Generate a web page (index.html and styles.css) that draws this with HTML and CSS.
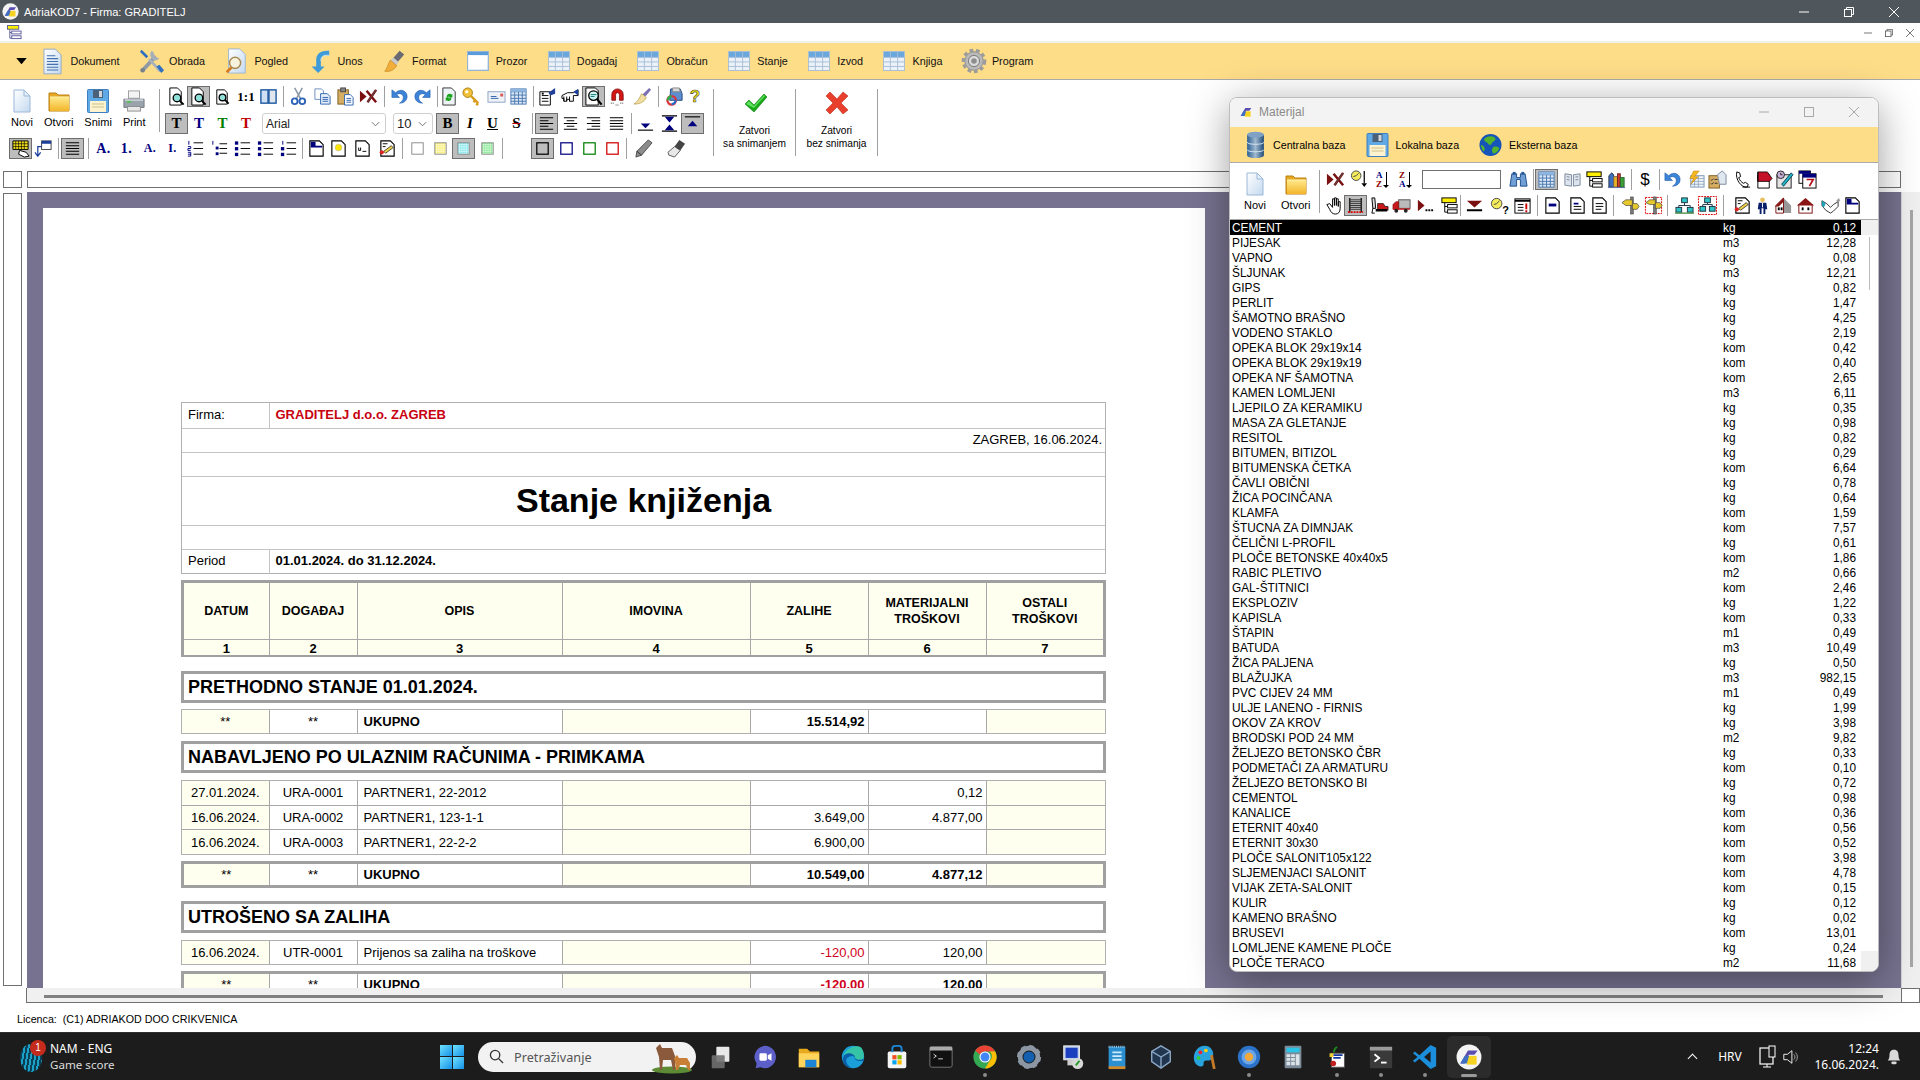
FILE: index.html
```html
<!DOCTYPE html>
<html lang="hr">
<head>
<meta charset="utf-8">
<title>AdriaKOD7</title>
<link rel="stylesheet" href="styles.css">
</head>
<body>
<svg class="defs" aria-hidden="true">
<defs>
<linearGradient id="gDoc" x1="0" y1="0" x2="1" y2="1"><stop offset="0" stop-color="#fff"/><stop offset="1" stop-color="#c4d9f0"/></linearGradient>
<linearGradient id="gFold" x1="0" y1="0" x2="0" y2="1"><stop offset="0" stop-color="#ffe98a"/><stop offset="1" stop-color="#f2b52a"/></linearGradient>
<linearGradient id="gDb" x1="0" y1="0" x2="1" y2="0"><stop offset="0" stop-color="#2b5f92"/><stop offset=".5" stop-color="#9fb9cf"/><stop offset="1" stop-color="#1f4a78"/></linearGradient>
<pattern id="pY" width="2" height="2" patternUnits="userSpaceOnUse"><rect width="2" height="2" fill="#fff"/><rect width="1.2" height="1.2" fill="#f5e300"/></pattern>
<pattern id="pC" width="2" height="2" patternUnits="userSpaceOnUse"><rect width="2" height="2" fill="#fff"/><rect width="1.2" height="1.2" fill="#1fd5e0"/></pattern>
<pattern id="pG" width="2" height="2" patternUnits="userSpaceOnUse"><rect width="2" height="2" fill="#fff"/><rect width="1.2" height="1.2" fill="#25d63a"/></pattern>

<symbol id="logo" viewBox="0 0 24 24"><circle cx="12" cy="12" r="11.5" fill="#f4f4f4"/><path d="M4 18L11 6h9l-3 4h-5l-4 8z" fill="#5a4fb0"/><rect x="10" y="11" width="9" height="8" fill="#f6d321"/><path d="M4 18l4-7h4l-2 7z" fill="#3f6fc4"/></symbol>
<symbol id="tree" viewBox="0 0 16 16"><rect x="0.5" y="0.5" width="12" height="4" fill="#f7ef00" stroke="#5a5a9a"/><path d="M3 5v9h2M3 8h2" fill="none" stroke="#5a5a9a"/><rect x="5" y="6.5" width="10" height="3" fill="#fff" stroke="#5a5a9a"/><rect x="5" y="11.5" width="10" height="3" fill="#fff" stroke="#5a5a9a"/></symbol>
<symbol id="tri" viewBox="0 0 12 8"><path d="M0 0h12L6 7z" fill="#000"/></symbol>

<symbol id="r-doc" viewBox="0 0 20 28"><path d="M1 1h12l6 6v20H1z" fill="url(#gDoc)" stroke="#8fa9c8"/><path d="M4 8h9M4 11h12M4 14h12M4 17h12M4 20h12M4 23h12" stroke="#4372b0" stroke-width="1.2"/></symbol>
<symbol id="r-tools" viewBox="0 0 28 28"><path d="M4 25L19 9" stroke="#8f99a5" stroke-width="4"/><path d="M16 3a6 6 0 0 0 6 10l2-2-5-1-1-5z" transform="translate(-1 0)" fill="#a6b0bb"/><path d="M24 25L12 12" stroke="#a9b2bc" stroke-width="3"/><path d="M4 2l7 7-2 2-7-7z" fill="#2d6fc0"/><path d="M25 27l-5-7 3-2 5 6z" fill="#2d6fc0"/><circle cx="5" cy="24" r="2.5" fill="#78818c"/></symbol>
<symbol id="r-pog" viewBox="0 0 24 28"><path d="M4 1h12l6 6v20H4z" fill="url(#gDoc)" stroke="#9db6d3"/><circle cx="11" cy="16" r="6" fill="#f7f2dd" stroke="#a88b55" stroke-width="1.6"/><path d="M7 21l-5 5" stroke="#d87a1c" stroke-width="3"/></symbol>
<symbol id="r-unos" viewBox="0 0 24 28"><path d="M9 20V13C9 6 14 2 23 3v5c-6-1-9 1-9 6v6h4l-7 7-7-7z" fill="#3f9ad8"/><path d="M14 14c0-5 3-7 9-6" fill="none" stroke="#bfe3f7" stroke-width="1"/></symbol>
<symbol id="r-format" viewBox="0 0 26 28"><path d="M19 3l5 4-7 8-5-4z" fill="#6a6a72"/><path d="M12 10l6 5-3 4-6-5z" fill="#c9c9c9"/><path d="M9 13l7 6c-3 5-8 7-13 6 3-3 3-7 6-12z" fill="#f1ae3a" stroke="#b87a18" stroke-width=".6"/></symbol>
<symbol id="r-win" viewBox="0 0 24 22"><rect x=".5" y=".5" width="23" height="21" fill="url(#gDoc)" stroke="#8fb1d6"/><rect x="1" y="1" width="22" height="3.5" fill="#5a9bdb"/><rect x="2" y="5" width="20" height="15" fill="#fff"/></symbol>
<symbol id="r-tab" viewBox="0 0 24 22"><rect x=".5" y=".5" width="23" height="21" fill="#eaf1f8" stroke="#a7bdd4"/><path d="M1 1h22v6H1z" fill="#6aa7dd"/><path d="M8 1v20M16 1v20M1 7h22M1 12h22M1 17h22" stroke="#a7bdd4"/></symbol>
<symbol id="r-gear" viewBox="0 0 28 28"><circle cx="14" cy="14" r="10" fill="#b9b9b9" stroke="#8a8a8a"/><circle cx="14" cy="14" r="11.5" fill="none" stroke="#9c9c9c" stroke-width="3.5" stroke-dasharray="4 3"/><circle cx="14" cy="14" r="6" fill="#dcdcdc" stroke="#777"/><circle cx="14" cy="14" r="3" fill="#8d8d8d"/></symbol>

<symbol id="b-doc" viewBox="0 0 18 24"><path d="M1 1h10l6 6v16H1z" fill="url(#gDoc)" stroke="#9bb8d8"/><path d="M11 1v6h6z" fill="#e5effa" stroke="#9bb8d8"/></symbol>
<symbol id="b-fold" viewBox="0 0 22 22"><path d="M1 3h7l2 2h11v16H1z" fill="#e7a822" stroke="#b97f12"/><path d="M2 7h19v14H2z" fill="url(#gFold)"/><path d="M2 7h19" stroke="#fff2b3"/></symbol>
<symbol id="b-flop" viewBox="0 0 22 24"><rect x=".5" y=".5" width="21" height="23" rx="1" fill="#5fa9e6" stroke="#3f7fc0"/><rect x="6" y="1" width="10" height="8" fill="#4b6178"/><rect x="12" y="2" width="3" height="6" fill="#cfd8e0"/><rect x="3" y="12" width="16" height="11" fill="#fdf4cf"/><path d="M5 15h12M5 18h12" stroke="#cdbf8d"/></symbol>
<symbol id="b-print" viewBox="0 0 24 24"><rect x="6" y="1" width="12" height="8" fill="#f4f4f4" stroke="#9a9a9a"/><path d="M1 10h22v9H1z" fill="#9aa3ab" stroke="#6f7780"/><rect x="5" y="18" width="14" height="5" fill="#e8e8e8" stroke="#8b8b8b"/><rect x="4" y="12" width="5" height="2" fill="#5bbf5b"/><path d="M2 10h20v2H2z" fill="#c5ccd2"/></symbol>
<symbol id="ok" viewBox="0 0 24 24"><path d="M2 13l4-4 5 5L21 3l3 3-13 15z" fill="#18a818" stroke="#0e7d0e" stroke-width=".6"/><path d="M3 13l3-3 5 5L21 4l1 1-11 12z" fill="#5fe05f"/></symbol>
<symbol id="no" viewBox="0 0 24 24"><path d="M5 1l7 7 6-7 5 4-7 7 7 7-5 4-6-7-7 7-4-4 7-7-7-7z" fill="#e8402c" stroke="#b92a1a" stroke-width=".6"/></symbol>

<symbol id="pm" viewBox="0 0 20 20"><path d="M3 1h8l4 4v14H3z" fill="#fff" stroke="#000"/><circle cx="10.5" cy="11.5" r="4" fill="#8fe0d8" stroke="#000" stroke-width="1.4"/><path d="M13.5 14.5l4 4" stroke="#000" stroke-width="2"/></symbol>
<symbol id="pm2" viewBox="0 0 20 20"><path d="M4 3h8l3 3v12H4z" fill="#fff" stroke="#000"/><circle cx="10" cy="11" r="3.5" fill="#8fe0d8" stroke="#000" stroke-width="1.4"/><path d="M12.5 13.5l4 4" stroke="#000" stroke-width="2"/></symbol>
<symbol id="book" viewBox="0 0 20 20"><rect x="2" y="3" width="7.5" height="14" fill="#cfe0f5" stroke="#12509a" stroke-width="1.4"/><rect x="10.5" y="3" width="7.5" height="14" fill="#dfe6ee" stroke="#12509a" stroke-width="1.4"/></symbol>
<symbol id="sci" viewBox="0 0 20 20"><path d="M6 1l6 11M14 1L8 12" stroke="#8b97a3" stroke-width="1.6"/><circle cx="6" cy="15" r="3" fill="none" stroke="#2b63b8" stroke-width="2"/><circle cx="14" cy="15" r="3" fill="none" stroke="#2b63b8" stroke-width="2"/></symbol>
<symbol id="copy" viewBox="0 0 20 20"><path d="M2 2h7l2 2v9H2z" fill="#fff" stroke="#6c8fc0"/><path d="M8 7h7l3 3v8H8z" fill="#e6effa" stroke="#2f63ad"/><path d="M10 11h6M10 13h6M10 15h6" stroke="#2f63ad"/></symbol>
<symbol id="paste" viewBox="0 0 20 20"><rect x="2" y="3" width="11" height="15" fill="#d6ad62" stroke="#7d5d22"/><rect x="5" y="1" width="5" height="4" fill="#888" stroke="#444"/><path d="M9 8h6l3 3v8H9z" fill="#fff" stroke="#2f63ad"/><path d="M11 12h5M11 14h5M11 16h5" stroke="#2f63ad"/></symbol>
<symbol id="delx" viewBox="0 0 20 20"><path d="M1 4l7 6-7 6z" fill="#7a1010"/><path d="M8 4l10 12M18 3L9 16" stroke="#7a1010" stroke-width="2.6"/><path d="M18 3L9 16" stroke="#555" stroke-width="1"/></symbol>
<symbol id="undo" viewBox="0 0 20 20"><path d="M2 3v8h8L7 8c3-2 7-1 7 3 0 3-2 5-4 6 5 0 8-3 8-7 0-6-7-9-12-4z" fill="#3d84d8" stroke="#1e5aa8" stroke-width=".6"/></symbol>
<symbol id="redo" viewBox="0 0 20 20"><path d="M18 3v8h-8l3-3c-3-2-7-1-7 3 0 3 2 5 4 6-5 0-8-3-8-7 0-6 7-9 12-4z" fill="#3d84d8" stroke="#1e5aa8" stroke-width=".6"/></symbol>
<symbol id="dref" viewBox="0 0 20 20"><path d="M3 1h9l4 4v14H3z" fill="#eef3f8" stroke="#333"/><path d="M7 10a3 3 0 0 1 5-2l1-1v4H9l1-1a2 2 0 0 0-2 1zM12 12a3 3 0 0 1-5 2l-1 1v-4h4l-1 1a2 2 0 0 0 2-1z" fill="#17a317"/></symbol>
<symbol id="key" viewBox="0 0 20 20"><circle cx="6" cy="6" r="5" fill="#f2c13a" stroke="#a87a12"/><circle cx="5" cy="5" r="1.6" fill="#fff"/><path d="M9 9l8 8M14 14l-2 2M17 17l-2 2" stroke="#d79e1d" stroke-width="2.6"/></symbol>
<symbol id="mail" viewBox="0 0 20 20"><rect x="1" y="5" width="18" height="11" fill="#eef2f7" stroke="#8da4c2"/><path d="M4 10h6M4 12h8" stroke="#2f63ad"/><rect x="14" y="7" width="3" height="3" fill="#d55"/></symbol>
<symbol id="calc" viewBox="0 0 20 20"><rect x="2" y="2" width="16" height="16" fill="#dbe8f6" stroke="#4a78b0"/><path d="M2 5h16M2 8.500h16M2 12h16M2 15h16M6 5v13M10 5v13M14 5v13" stroke="#4a78b0"/><rect x="2" y="2" width="16" height="3" fill="#8fb6e0"/></symbol>
<symbol id="dflag" viewBox="0 0 20 20"><path d="M2 5h11v14H2z" fill="#fff" stroke="#000"/><path d="M4 9h7M4 12h7M4 15h7" stroke="#000"/><path d="M11 6l7-5v6l-5 2z" fill="#23409a"/><rect x="4" y="6" width="2" height="2" fill="#000"/></symbol>
<symbol id="hnd" viewBox="0 0 20 20"><path d="M1 9l6-3h6l5-3v6h-5v6H9v-2H6v2H3v-3H1z" fill="#fff" stroke="#000"/><path d="M13 5l5-3v7" fill="#1c3f9e"/><path d="M3 10v5M6 10v5M9 10v5" stroke="#000"/></symbol>
<symbol id="insp" viewBox="0 0 20 20"><path d="M2 1h10l3 3v15H2z" fill="#fff" stroke="#000"/><circle cx="10" cy="9" r="5" fill="#cff3ee" stroke="#000" stroke-width="1.4"/><path d="M7 8h6M7 10h4" stroke="#0a7a80"/><path d="M13.500 12.500l5 6" stroke="#000" stroke-width="2.2"/></symbol>
<symbol id="mag" viewBox="0 0 20 20"><path d="M4 14V8a6 6 0 0 1 12 0v6h-4V8a2 2 0 0 0-4 0v6z" fill="#d41616" stroke="#7a0a0a" stroke-width=".8"/><path d="M3 17h4M13 17h4M8 19h4" stroke="#333" stroke-dasharray="1 1"/></symbol>
<symbol id="broom" viewBox="0 0 20 20"><path d="M17 1l2 2-6 7-3-2z" fill="#7b6fb2"/><path d="M9 7l5 4c-2 5-7 7-13 7 3-2 6-6 8-11z" fill="#f0dd9f" stroke="#b59a4c" stroke-width=".7"/></symbol>
<symbol id="cpr" viewBox="0 0 20 20"><path d="M6 2h10l2 5v7H5z" fill="#5b8fd0" stroke="#244a80"/><path d="M8 1h7l1 4H8z" fill="#d8d8d8" stroke="#888"/><circle cx="7" cy="14" r="4.5" fill="none" stroke="#d9363e" stroke-width="2.4"/><path d="M3 14a4 4 0 0 1 4-4" fill="none" stroke="#28b34a" stroke-width="2.4"/><path d="M7 18a4 4 0 0 0 4-4" fill="none" stroke="#1e6fd0" stroke-width="2.4"/></symbol>
<symbol id="al-l" viewBox="0 0 20 20"><path d="M3 4h14M3 7h9M3 10h14M3 13h9M3 16h14" stroke="#000" stroke-width="1.1"/></symbol>
<symbol id="al-c" viewBox="0 0 20 20"><path d="M3 4h14M6 7h8M3 10h14M6 13h8M3 16h14" stroke="#000" stroke-width="1.1"/></symbol>
<symbol id="al-r" viewBox="0 0 20 20"><path d="M3 4h14M8 7h9M3 10h14M8 13h9M3 16h14" stroke="#000" stroke-width="1.1"/></symbol>
<symbol id="al-j" viewBox="0 0 20 20"><path d="M3 4h14M3 7h14M3 10h14M3 13h14M3 16h14" stroke="#000" stroke-width="1.1"/></symbol>
<symbol id="v-b" viewBox="0 0 20 20"><path d="M5 10h10l-5 5z" fill="#00007f"/><path d="M2 17h16" stroke="#000" stroke-width="1.2"/></symbol>
<symbol id="v-m" viewBox="0 0 20 20"><path d="M2 2h16M2 18h16" stroke="#000" stroke-width="1.2"/><path d="M5 3h10l-5 6zM5 17h10l-5-6z" fill="#00007f"/></symbol>
<symbol id="v-t" viewBox="0 0 20 20"><path d="M2 3h16" stroke="#000" stroke-width="1.2"/><path d="M5 13h10l-5-6z" fill="#00007f"/></symbol>
<symbol id="kb" viewBox="0 0 20 20"><path d="M2 2h16v9H2z" fill="#f3e21c" stroke="#000"/><path d="M2 5h16M2 8h16M5 2v9M8 2v9M11 2v9M14 2v9" stroke="#000" stroke-width=".7"/><path d="M9 12l7 2 3 4-5 1-6-3z" fill="#fff" stroke="#000"/></symbol>
<symbol id="tabar" viewBox="0 0 20 20"><rect x="8" y="2" width="10" height="9" fill="#fff" stroke="#444"/><rect x="8" y="2" width="10" height="3" fill="#1c3f9e"/><path d="M8 8H4v9M1 14l3 4 3-4" fill="none" stroke="#1c3f9e" stroke-width="1.3"/></symbol>
<symbol id="l1" viewBox="0 0 20 20"><path d="M8 4h10M8 10h10M8 16h10" stroke="#000"/><path d="M3 2v4M2 8h3v2H2v2h3M2 14h3v4H2M2 16h3" fill="none" stroke="#00007f"/></symbol>
<symbol id="l2" viewBox="0 0 20 20"><path d="M10 5h8M10 10h8M10 15h8" stroke="#000"/><path d="M3 2v4" stroke="#00007f"/><rect x="6" y="8" width="3" height="3" fill="#00007f"/><rect x="6" y="14" width="3" height="3" fill="#00007f"/></symbol>
<symbol id="l3" viewBox="0 0 20 20"><path d="M8 4h10M8 10h10M8 16h10" stroke="#000"/><rect x="2" y="2.500" width="3.500" height="3.500" fill="#00007f"/><rect x="2" y="8.500" width="3.500" height="3.500" fill="#00007f"/><rect x="2" y="14.500" width="3.500" height="3.500" fill="#00007f"/></symbol>
<symbol id="l4" viewBox="0 0 20 20"><path d="M8 4h10M8 10h10M8 16h10" stroke="#000"/><path d="M4 2v4" stroke="#00007f"/><rect x="2" y="8.500" width="3.500" height="3.500" fill="#00007f"/><rect x="2" y="14.500" width="3.500" height="3.500" fill="#00007f"/></symbol>
<symbol id="d-b" viewBox="0 0 20 20"><path d="M3 2h10l4 4v12H3z" fill="#fff" stroke="#000" stroke-width="1.2"/><path d="M4 3h5v4h7v2H4z" fill="#00007f"/></symbol>
<symbol id="d-y" viewBox="0 0 20 20"><path d="M3 2h10l4 4v12H3z" fill="#fff" stroke="#000" stroke-width="1.2"/><circle cx="10" cy="9" r="3.500" fill="#ffe600" stroke="#aa9" stroke-width=".5"/></symbol>
<symbol id="d-u" viewBox="0 0 20 20"><path d="M3 2h10l4 4v12H3z" fill="#fff" stroke="#000" stroke-width="1.2"/><path d="M6 9v3h2V9M10 13h4" fill="none" stroke="#000"/></symbol>
<symbol id="d-p" viewBox="0 0 20 20"><path d="M3 2h10l4 4v12H3z" fill="#fff" stroke="#000" stroke-width="1.2"/><path d="M5 5h5M5 8h3" stroke="#000"/><path d="M6 13l8-6 2 2-8 6z" fill="#f0d34a" stroke="#000" stroke-width=".7"/><circle cx="4" cy="14" r="2.200" fill="#d22"/></symbol>
<symbol id="d-m" viewBox="0 0 20 20"><path d="M3 2h10l4 4v12H3z" fill="#fff" stroke="#000" stroke-width="1.2"/><rect x="6" y="8" width="8" height="3" fill="#00007f"/></symbol>
<symbol id="d-l" viewBox="0 0 20 20"><path d="M3 2h10l4 4v12H3z" fill="#fff" stroke="#000" stroke-width="1.2"/><path d="M6 8h5" stroke="#00007f" stroke-width="2"/><path d="M6 11h8M6 14h8" stroke="#000"/></symbol>
<symbol id="d-t" viewBox="0 0 20 20"><path d="M3 2h10l4 4v12H3z" fill="#fff" stroke="#000" stroke-width="1.2"/><path d="M6 8h8M6 11h8M6 14h6" stroke="#000"/></symbol>
<symbol id="s0" viewBox="0 0 20 20"><rect x="4" y="4" width="12" height="12" fill="#fff" stroke="#8a8a8a"/></symbol>
<symbol id="sy" viewBox="0 0 20 20"><rect x="4" y="4" width="12" height="12" fill="url(#pY)" stroke="#8a8a8a"/></symbol>
<symbol id="sc" viewBox="0 0 20 20"><rect x="4" y="4" width="12" height="12" fill="url(#pC)" stroke="#8a8a8a"/></symbol>
<symbol id="sg" viewBox="0 0 20 20"><rect x="4" y="4" width="12" height="12" fill="url(#pG)" stroke="#8a8a8a"/></symbol>
<symbol id="ok-k" viewBox="0 0 20 20"><rect x="4" y="4" width="12" height="12" fill="none" stroke="#000" stroke-width="1.300"/></symbol>
<symbol id="ok-b" viewBox="0 0 20 20"><rect x="4" y="4" width="12" height="12" fill="none" stroke="#00007f" stroke-width="1.300"/></symbol>
<symbol id="ok-g" viewBox="0 0 20 20"><rect x="4" y="4" width="12" height="12" fill="none" stroke="#007f00" stroke-width="1.300"/></symbol>
<symbol id="ok-r" viewBox="0 0 20 20"><rect x="4" y="4" width="12" height="12" fill="none" stroke="#d00000" stroke-width="1.300"/></symbol>
<symbol id="pen1" viewBox="0 0 20 20"><path d="M15 1l4 3-11 13-6 2 1-6z" fill="#8c8c8c" stroke="#333" stroke-width=".8"/><path d="M3 13l5 4" stroke="#333"/></symbol>
<symbol id="pen2" viewBox="0 0 20 20"><path d="M13 1l6 4-5 7-6-4z" fill="#444"/><path d="M8 8l6 4-6 7-6-2-1-3z" fill="#e8e8e8" stroke="#333" stroke-width=".8"/></symbol>

<symbol id="clk" viewBox="0 0 20 20"><circle cx="6.500" cy="6" r="5" fill="#f4ec5a" stroke="#444"/><path d="M6.500 6L9 3.500M6.500 6L3.500 7" stroke="#444"/><path d="M15 1v13" stroke="#000" stroke-width="1.300"/><path d="M12 14h6l-3 4z" fill="#000"/></symbol>
<symbol id="clkq" viewBox="0 0 20 20"><circle cx="7" cy="8" r="5.500" fill="#f4ec5a" stroke="#444"/><path d="M7 8l3-3M7 8L4 9" stroke="#444"/></symbol>
<symbol id="binoc" viewBox="0 0 20 20"><path d="M3 4h5v4h4V4h5l2 13h-7V10H8v7H1z" fill="#6f9fd4" stroke="#1d4d8c"/><rect x="4" y="2" width="3" height="3" fill="#2a5a98"/><rect x="13" y="2" width="3" height="3" fill="#2a5a98"/></symbol>
<symbol id="obook" viewBox="0 0 20 20"><path d="M2 4l7 1v12l-7-1zM18 4l-7 1v12l7-1z" fill="#dde4ec" stroke="#7b8a9c"/><path d="M4 7l3 .5M4 10l3 .5M13 7.500l3-.5M13 10.500l3-.5" stroke="#7b8a9c"/></symbol>
<symbol id="ytree" viewBox="0 0 20 20"><rect x="2" y="2" width="15" height="5" fill="#ffee00" stroke="#000"/><path d="M5 7v10h3M5 11h3" fill="none" stroke="#000"/><rect x="8" y="9" width="10" height="3.500" fill="#fff" stroke="#000"/><rect x="8" y="14.500" width="10" height="3.500" fill="#fff" stroke="#000"/></symbol>
<symbol id="bks" viewBox="0 0 20 20"><path d="M2 18V6l3-3 2 2v13z" fill="#3d6fc0" stroke="#234"/><rect x="7" y="7" width="4" height="11" fill="#e6b422" stroke="#765"/><rect x="11" y="4" width="3" height="14" fill="#cf3a2a" stroke="#722"/><rect x="14" y="8" width="4" height="10" fill="#3da03d" stroke="#262"/><path d="M1 18.500h18" stroke="#5b6fa8"/></symbol>
<symbol id="tlit" viewBox="0 0 20 20"><rect x="5" y="6" width="14" height="12" fill="#eef3f8" stroke="#7d96b4"/><path d="M5 9h14M5 12h14M5 15h14M9 6v12M13 6v12" stroke="#7d96b4" stroke-width=".7"/><path d="M8 1h6L9 7h4l-8 8 3-6H4z" fill="#f5b61e" stroke="#b77f0c" stroke-width=".5"/></symbol>
<symbol id="clbh" viewBox="0 0 20 20"><rect x="1" y="6" width="11" height="13" fill="#d6ad62" stroke="#7d5d22"/><path d="M3 10l1 1 2-2M3 14l1 1 2-2M7 10h3M7 14h3" stroke="#333" fill="none"/><path d="M10 5l5-4 4 4v10h-7z" fill="#dfe7ef" stroke="#7b8a9c"/></symbol>
<symbol id="phone" viewBox="0 0 20 20"><path d="M4 2l3 1 1 4-2 1c1 3 3 5 5 6l2-1 3 2-1 3c-6 1-13-8-11-16z" fill="#fff" stroke="#000"/><path d="M10 18h8" stroke="#000"/></symbol>
<symbol id="nbk" viewBox="0 0 20 20"><path d="M3 5h12v14H3z" fill="#fff" stroke="#000"/><path d="M3 2h10l5 7-3 3H3z" fill="#c4122a" stroke="#000" stroke-width=".8"/><path d="M3 2v10" stroke="#000"/></symbol>
<symbol id="chart" viewBox="0 0 20 20"><rect x="2" y="5" width="15" height="14" fill="#e5e5e5" stroke="#222"/><circle cx="6" cy="5" r="4" fill="#c9b3d8" stroke="#222"/><path d="M6 5V3M6 5h2" stroke="#222"/><path d="M7 15L17 3l2 2L9 17z" fill="#1fb1c4" stroke="#145"/></symbol>
<symbol id="cal" viewBox="0 0 20 20"><rect x="1" y="1" width="12" height="13" fill="#fff" stroke="#000"/><rect x="5" y="4" width="14" height="15" fill="#fff" stroke="#000"/><rect x="5" y="4" width="14" height="4" fill="#00007f"/><path d="M1 1h12v3H1z" fill="#00007f"/><path d="M9 10h7l-4 7" fill="none" stroke="#b5121b" stroke-width="1.800"/></symbol>
<symbol id="ghand" viewBox="0 0 20 20"><path d="M3 9l3 5c1 3 3 5 6 5s5-2 5-6V6h-2v5V3h-2v7V2h-2v8V3H9v9L6 8z" fill="#fff" stroke="#000"/></symbol>
<symbol id="lad" viewBox="0 0 20 20"><path d="M4 2v15M16 2v15" stroke="#000" stroke-width="1.300"/><path d="M4 4h12M4 6h12M4 8h12M4 10h12M4 12h12M4 14h12" stroke="#333"/><path d="M2 17h16" stroke="#d00" stroke-width="2" stroke-dasharray="2 1"/></symbol>
<symbol id="exc" viewBox="0 0 20 20"><path d="M2 2h3l1 11H3z" fill="#ddd" stroke="#000"/><path d="M8 8h6l2 3h3v4H8z" fill="#c81a1a" stroke="#000" stroke-width=".7"/><path d="M6 15h12" stroke="#000" stroke-width="2.400"/><path d="M3 13l-1 5h3" stroke="#000" fill="none"/></symbol>
<symbol id="trk" viewBox="0 0 20 20"><rect x="7" y="4" width="12" height="9" fill="#bbb" stroke="#555"/><path d="M1 9l3-3h3v8H1z" fill="#c81a1a" stroke="#700" stroke-width=".6"/><rect x="1" y="13" width="18" height="1.500" fill="#c81a1a"/><circle cx="4.500" cy="15.500" r="2" fill="#222"/><circle cx="14.500" cy="15.500" r="2" fill="#222"/></symbol>
<symbol id="arrd" viewBox="0 0 20 20"><path d="M2 4l7 6-7 6z" fill="#7a1010"/><rect x="10" y="14" width="2" height="2" fill="#000"/><rect x="13" y="14" width="2" height="2" fill="#000"/><rect x="16" y="14" width="2" height="2" fill="#000"/></symbol>
<symbol id="trid" viewBox="0 0 20 20"><path d="M2 5h16l-8 7z" fill="#7a1010"/><path d="M2 15h16" stroke="#000" stroke-width="2"/></symbol>
<symbol id="dex" viewBox="0 0 20 20"><rect x="2" y="3" width="16" height="15" fill="#fff" stroke="#000"/><path d="M2 5h16" stroke="#000" stroke-width="2"/><path d="M5 9h6M5 12h6M5 15h6" stroke="#000"/><path d="M14 8v6" stroke="#c00" stroke-width="2"/><rect x="13" y="15" width="2" height="2" fill="#c00"/></symbol>
<symbol id="sign" viewBox="0 0 20 20"><rect x="10" y="1" width="3" height="18" fill="#777" stroke="#333" stroke-width=".5"/><path d="M1 7l4-3h7v6H5z" fill="#e6c72c" stroke="#444" stroke-width=".7"/><path d="M12 8h5l2 3-2 3h-5z" fill="#e6c72c" stroke="#444" stroke-width=".7"/></symbol>
<symbol id="signd" viewBox="0 0 20 20"><rect x="1.500" y="1.500" width="17" height="17" fill="none" stroke="#d00" stroke-dasharray="2 1"/><rect x="10" y="1" width="3" height="18" fill="#777" stroke="#333" stroke-width=".5"/><path d="M2 7l4-3h6v5H6z" fill="#e6c72c" stroke="#444" stroke-width=".7"/><path d="M12 7h5l2 3-2 3h-5z" fill="#e6c72c" stroke="#444" stroke-width=".7"/></symbol>
<symbol id="net" viewBox="0 0 20 20"><rect x="7" y="2" width="6" height="5" fill="#2cc4c4" stroke="#234"/><rect x="1" y="12" width="6" height="5" fill="#2cc4c4" stroke="#234"/><rect x="13" y="12" width="6" height="5" fill="#2cc4c4" stroke="#234"/><path d="M10 7v3M4 12v-2h12v2" stroke="#234" fill="none"/><path d="M0 18h20" stroke="#3a8a3a" stroke-width="1.400"/></symbol>
<symbol id="netd" viewBox="0 0 20 20"><rect x=".5" y=".5" width="19" height="19" fill="none" stroke="#d00" stroke-dasharray="2 1"/><rect x="7" y="2" width="6" height="5" fill="#2cc4c4" stroke="#234"/><rect x="2" y="11" width="6" height="5" fill="#2cc4c4" stroke="#234"/><rect x="12" y="11" width="6" height="5" fill="#2cc4c4" stroke="#234"/><path d="M10 7v2M5 11V9h10v2" stroke="#234" fill="none"/></symbol>
<symbol id="man" viewBox="0 0 20 20"><circle cx="10" cy="4" r="2.500" fill="#e8c060"/><path d="M6 7h8l1 7h-2v5h-2v-6H9v6H7v-5H5z" fill="#0a1f6a"/><path d="M10 7v5" stroke="#fff"/></symbol>
<symbol id="hsg" viewBox="0 0 20 20"><path d="M10 2l8 8v8H10z" fill="#999"/><path d="M10 2L2 10v8h8z" fill="#fff" stroke="#7a1010"/><path d="M10 2L1 11h4l5-5z" fill="#8a1414"/><rect x="4" y="12" width="2" height="3" fill="#000"/><rect x="7" y="12" width="2" height="3" fill="#000"/></symbol>
<symbol id="hsr" viewBox="0 0 20 20"><rect x="3" y="9" width="14" height="9" fill="#fff" stroke="#7a1010"/><path d="M10 2l9 8H1z" fill="#8a1414"/><rect x="6" y="12" width="2" height="3" fill="#000"/><rect x="12" y="12" width="2" height="3" fill="#000"/></symbol>
<symbol id="hnds" viewBox="0 0 20 20"><path d="M1 5l5 3 4 4 3-3 5-3v5l-5 5-3 2-5-3-4-5z" fill="#fff" stroke="#000" stroke-width=".8"/><path d="M1 5l4 3-2 4-2-2z" fill="#1fa1b8"/><path d="M19 2l-3 3 2 2 2-2z" fill="#999"/></symbol>

<symbol id="t-view" viewBox="0 0 28 28"><rect x="9" y="3" width="14" height="16" rx="1" fill="#e8e8e8"/><rect x="4" y="12" width="14" height="14" rx="1" fill="#707070" opacity=".9"/></symbol>
<symbol id="t-chat" viewBox="0 0 28 28"><path d="M14 2a12 12 0 1 1-5 23l-5 1 1-5A12 12 0 0 1 14 2z" fill="#5b5fc7"/><rect x="8" y="10" width="8" height="8" rx="1.500" fill="#fff"/><path d="M17 12l4-2v8l-4-2z" fill="#fff"/></symbol>
<symbol id="t-fold" viewBox="0 0 28 28"><path d="M3 5h9l3 3h10v17H3z" fill="#e9a91f"/><path d="M3 10h22v15H3z" fill="#ffd45a"/><rect x="10" y="17" width="12" height="8" fill="#1c84d8"/></symbol>
<symbol id="t-edge" viewBox="0 0 28 28"><circle cx="14" cy="14" r="12" fill="#1b9fd8"/><path d="M3 17c0-8 12-11 20-5 2 2 3 4 2 6-4 1-9 0-9-3 0-3-6-3-9 1-1 3 1 8 6 10C8 26 3 22 3 17z" fill="#0b5ea8"/><path d="M23 4c3 4 3 8 2 12-3 2-9 1-9-2s-7-6-12-2C7 4 18 0 23 4z" fill="#35c5a6"/></symbol>
<symbol id="t-store" viewBox="0 0 28 28"><rect x="4" y="8" width="20" height="18" rx="2" fill="#f5f5f5"/><path d="M9 9V5a3 3 0 0 1 3-3h4a3 3 0 0 1 3 3v4" fill="none" stroke="#1b88d8" stroke-width="2"/><rect x="9" y="12" width="4.500" height="4.500" fill="#f25022"/><rect x="14.500" y="12" width="4.500" height="4.500" fill="#7fba00"/><rect x="9" y="17.500" width="4.500" height="4.500" fill="#00a4ef"/><rect x="14.500" y="17.500" width="4.500" height="4.500" fill="#ffb900"/></symbol>
<symbol id="t-cmd" viewBox="0 0 28 28"><rect x="2" y="3" width="24" height="22" rx="2" fill="#111" stroke="#7a7a7a"/><rect x="2" y="3" width="24" height="4" fill="#aaa"/><path d="M6 11l3 2-3 2M11 16h5" stroke="#ddd" fill="none"/></symbol>
<symbol id="t-chrome" viewBox="0 0 28 28"><circle cx="14" cy="14" r="12.500" fill="#34a853"/><path d="M14 1.500a12.500 12.500 0 0 1 11 6.500H14a6 6 0 0 0-5.500 3.500L3.500 7A12.500 12.500 0 0 1 14 1.500z" fill="#ea4335"/><path d="M25 8a12.500 12.500 0 0 1-11 18.500L19 18a6 6 0 0 0-.5-10z" fill="#fbbc05"/><circle cx="14" cy="14" r="6" fill="#fff"/><circle cx="14" cy="14" r="4.800" fill="#4285f4"/></symbol>
<symbol id="t-gear" viewBox="0 0 28 28"><circle cx="14" cy="14" r="9.500" fill="none" stroke="#8c97a3" stroke-width="5"/><circle cx="14" cy="14" r="11.500" fill="none" stroke="#8c97a3" stroke-width="3" stroke-dasharray="5 4"/><circle cx="14" cy="14" r="6" fill="#1360b0"/></symbol>
<symbol id="t-rem" viewBox="0 0 28 28"><rect x="4" y="2" width="17" height="15" fill="#c0d0e8" stroke="#eee"/><rect x="6" y="4" width="13" height="11" fill="#1b3fbf"/><rect x="8" y="17" width="10" height="6" fill="#ccc"/><circle cx="19" cy="21" r="6" fill="#d8d8d8"/><path d="M17 23l4-5" stroke="#229922" stroke-width="2"/></symbol>
<symbol id="t-note" viewBox="0 0 28 28"><rect x="5" y="3" width="18" height="22" fill="#2c8fd0"/><path d="M5 3h18" stroke="#9ed0f0" stroke-width="2" stroke-dasharray="1 1"/><path d="M9 9h10M9 13h10M9 17h10" stroke="#cde9fa" stroke-width="2"/><rect x="5" y="24" width="18" height="3" fill="#d18a2c"/></symbol>
<symbol id="t-vbox" viewBox="0 0 28 28"><path d="M14 2l10 6v11l-10 7-10-7V8z" fill="#22354e" stroke="#8aa7c7" stroke-width="1.500"/><path d="M4 8l10 6 10-6M14 14v12" fill="none" stroke="#8aa7c7" stroke-width="1.500"/></symbol>
<symbol id="t-pal" viewBox="0 0 28 28"><path d="M14 2C6 2 2 9 2 15c0 7 6 10 9 9 3-1 0-5 3-6s6 1 8-3c3-6-2-13-8-13z" fill="#29a3dd"/><circle cx="9" cy="9" r="2" fill="#e23"/><circle cx="15" cy="7" r="2" fill="#fc0"/><circle cx="7" cy="15" r="2" fill="#3c3"/><path d="M21 12l3 15" stroke="#c77a28" stroke-width="3"/></symbol>
<symbol id="t-sun" viewBox="0 0 28 28"><circle cx="14" cy="14" r="12" fill="#2b72c8"/><circle cx="14" cy="14" r="8" fill="#6aa6e8"/><circle cx="14" cy="14" r="4.500" fill="#f3a93a"/></symbol>
<symbol id="t-calc" viewBox="0 0 28 28"><rect x="5" y="2" width="18" height="24" rx="1" fill="#7c8b99"/><rect x="7" y="4" width="14" height="5" fill="#2bc4e6"/><path d="M7 11h4v3H7zM12 11h4v3h-4zM7 15h4v3H7zM12 15h4v3h-4zM7 19h4v4H7zM12 19h4v4h-4zM17 11h4v12h-4z" fill="#dbe2e8"/></symbol>
<symbol id="t-pic" viewBox="0 0 28 28"><rect x="8" y="10" width="14" height="15" fill="#fff" stroke="#555"/><path d="M10 12h10M10 15h8" stroke="#12359a" stroke-width="2"/><circle cx="10" cy="21" r="3" fill="#c02020"/><path d="M14 3c-2 2-4 3-3 6" stroke="#1e8a1e" stroke-width="2" fill="none"/><rect x="6" y="10" width="4" height="4" fill="#e8d030"/></symbol>
<symbol id="t-term" viewBox="0 0 28 28"><rect x="2" y="3" width="24" height="23" rx="1" fill="#3a3a3a"/><rect x="2" y="3" width="24" height="4" fill="#9a9a9a"/><path d="M7 11l5 4-5 4" fill="none" stroke="#fff" stroke-width="2"/><path d="M14 20h6" stroke="#fff" stroke-width="2"/></symbol>
<symbol id="t-vsc" viewBox="0 0 28 28"><path d="M20 1l6 3v20l-6 3L8 16l-5 4-2-2 5-4-5-4 2-2 5 4z" fill="#1b8fdb"/><path d="M20 8l-7 6 7 6z" fill="#1c1c1c"/></symbol>
<symbol id="s-hor" viewBox="0 0 44 34"><ellipse cx="22" cy="30" rx="20" ry="3.500" fill="#5d8a34"/><path d="M6 8l4-4 2 4h10l3 8v14h-2l-2-10H13l-1 10h-2l-1-13z" fill="#8b5a3c"/><path d="M24 18l3-3 2 3h8l3 5v7h-2l-2-5h-6l-2 5h-2l-1-8z" fill="#c97f35"/></symbol>
<symbol id="s-mon" viewBox="0 0 20 24"><rect x="2" y="3" width="13" height="16" fill="none" stroke="#fff" stroke-width="1.200"/><rect x="11" y="1" width="6" height="11" fill="#1c1c1c" stroke="#fff"/><path d="M5 22h8M9 19v3" stroke="#fff"/></symbol>
<symbol id="s-spk" viewBox="0 0 20 20"><path d="M2 7h4l5-4v14l-5-4H2z" fill="none" stroke="#fff"/><path d="M13 7a4 4 0 0 1 0 6M15 5a7 7 0 0 1 0 10" fill="none" stroke="#aaa"/></symbol>
<symbol id="s-bell" viewBox="0 0 20 20"><path d="M10 2c-4 0-5 3-5 6 0 3-1 5-2 6h14c-1-1-2-3-2-6 0-3-1-6-5-6z" fill="#d8d8d8"/><rect x="7" y="15" width="6" height="3" rx="1.500" fill="#d8d8d8"/></symbol>
<symbol id="w-min" viewBox="0 0 10 10"><path d="M0 5h10" stroke="currentColor"/></symbol>
<symbol id="w-max" viewBox="0 0 10 10"><rect x=".5" y="2.500" width="7" height="7" fill="none" stroke="currentColor"/><path d="M2.500 2.500v-2h7v7h-2" fill="none" stroke="currentColor"/></symbol>
<symbol id="w-box" viewBox="0 0 10 10"><rect x=".5" y=".5" width="9" height="9" fill="none" stroke="currentColor"/></symbol>
<symbol id="w-x" viewBox="0 0 10 10"><path d="M0 0l10 10M10 0L0 10" stroke="currentColor"/></symbol>
<symbol id="chev" viewBox="0 0 10 6"><path d="M1 1l4 4 4-4" fill="none" stroke="#666"/></symbol>
<symbol id="db" viewBox="0 0 20 30"><path d="M1 4v22c0 4 18 4 18 0V4z" fill="url(#gDb)"/><ellipse cx="10" cy="4" rx="9" ry="3.200" fill="#7fa2c4"/><path d="M1 12c0 3 18 3 18 0M1 20c0 3 18 3 18 0" fill="none" stroke="#dfe9f2"/></symbol>
<symbol id="globe" viewBox="0 0 24 24"><circle cx="12" cy="12" r="11.500" fill="#1554b8"/><path d="M6 5c4-3 9-3 11 0 1 3-3 3-4 6-1 2-3 1-4-1-2-2-5-2-3-5zM15 14c3-1 6 0 6 2-1 3-4 5-6 5-2-2-2-5 0-7zM2 12c2 0 4 2 4 4 0 2-1 3-2 2-1-2-2-4-2-6z" fill="#52b32f"/></symbol>
</defs>
</svg>

<header class="titlebar">
  <svg class="title-logo"><use href="#logo"/></svg>
  <span class="title-text">AdriaKOD7 - Firma: GRADITELJ</span>
  <div class="win-btns">
    <svg class="wb"><use href="#w-min"/></svg>
    <svg class="wb"><use href="#w-max"/></svg>
    <svg class="wb"><use href="#w-x"/></svg>
  </div>
</header>

<div class="menubar">
  <svg class="menu-tree"><use href="#tree"/></svg>
  <div class="mdi-btns">
    <svg class="mb"><use href="#w-min"/></svg>
    <svg class="mb"><use href="#w-max"/></svg>
    <svg class="mb"><use href="#w-x"/></svg>
  </div>
</div>

<nav class="ribbon">
  <svg class="rib-arrow"><use href="#tri"/></svg>
  <div class="rib-item"><span class="rib-ic"><svg class="ric-doc"><use href="#r-doc"/></svg></span><span>Dokument</span></div>
  <div class="rib-item"><span class="rib-ic"><svg class="ric"><use href="#r-tools"/></svg></span><span>Obrada</span></div>
  <div class="rib-item"><span class="rib-ic"><svg class="ric"><use href="#r-pog"/></svg></span><span>Pogled</span></div>
  <div class="rib-item"><span class="rib-ic"><svg class="ric"><use href="#r-unos"/></svg></span><span>Unos</span></div>
  <div class="rib-item"><span class="rib-ic"><svg class="ric"><use href="#r-format"/></svg></span><span>Format</span></div>
  <div class="rib-item"><span class="rib-ic"><svg class="ric-tab"><use href="#r-win"/></svg></span><span>Prozor</span></div>
  <div class="rib-item"><span class="rib-ic"><svg class="ric-tab"><use href="#r-tab"/></svg></span><span>Događaj</span></div>
  <div class="rib-item"><span class="rib-ic"><svg class="ric-tab"><use href="#r-tab"/></svg></span><span>Obračun</span></div>
  <div class="rib-item"><span class="rib-ic"><svg class="ric-tab"><use href="#r-tab"/></svg></span><span>Stanje</span></div>
  <div class="rib-item"><span class="rib-ic"><svg class="ric-tab"><use href="#r-tab"/></svg></span><span>Izvod</span></div>
  <div class="rib-item"><span class="rib-ic"><svg class="ric-tab"><use href="#r-tab"/></svg></span><span>Knjiga</span></div>
  <div class="rib-item"><span class="rib-ic"><svg class="ric"><use href="#r-gear"/></svg></span><span>Program</span></div>
</nav>

<section class="toolbar">
  <div class="tb-left">
    <div class="tb-top">
      <div class="bigs">
        <div class="big"><svg class="big-doc"><use href="#b-doc"/></svg><span>Novi</span></div>
        <div class="big"><svg class="big-ic"><use href="#b-fold"/></svg><span>Otvori</span></div>
        <div class="big"><svg class="big-ic"><use href="#b-flop"/></svg><span>Snimi</span></div>
        <div class="big"><svg class="big-ic"><use href="#b-print"/></svg><span>Print</span></div>
      </div>
      <i class="vline"></i>
      <div class="tb-rows">
        <div class="tb-row">
          <b class="t w22"><svg class="i"><use href="#pm"/></svg></b>
          <b class="t w23 sel"><svg class="i"><use href="#pm"/></svg></b>
          <b class="t w25"><svg class="i"><use href="#pm2"/></svg></b>
          <b class="t w22 txt-11">1:1</b>
          <b class="t w22"><svg class="i"><use href="#book"/></svg></b>
          <i class="sp w8"></i>
          <b class="t w23"><svg class="i"><use href="#sci"/></svg></b>
          <b class="t w24"><svg class="i"><use href="#copy"/></svg></b>
          <b class="t w23"><svg class="i"><use href="#paste"/></svg></b>
          <b class="t w23"><svg class="i"><use href="#delx"/></svg></b>
          <i class="sp w8"></i>
          <b class="t w23"><svg class="i"><use href="#undo"/></svg></b>
          <b class="t w22"><svg class="i"><use href="#redo"/></svg></b>
          <i class="sp w8"></i>
          <b class="t w16"><svg class="i"><use href="#dref"/></svg></b>
          <b class="t w28"><svg class="i"><use href="#key"/></svg></b>
          <b class="t w23"><svg class="i"><use href="#mail"/></svg></b>
          <b class="t w21"><svg class="i"><use href="#calc"/></svg></b>
          <i class="sp w8"></i>
          <b class="t w21"><svg class="i"><use href="#dflag"/></svg></b>
          <b class="t w24"><svg class="i"><use href="#hnd"/></svg></b>
          <b class="t w23 sel"><svg class="i"><use href="#insp"/></svg></b>
          <b class="t w25"><svg class="i"><use href="#mag"/></svg></b>
          <b class="t w24"><svg class="i"><use href="#broom"/></svg></b>
          <i class="sp w8"></i>
          <b class="t w24"><svg class="i"><use href="#cpr"/></svg></b>
          <b class="t w18 qmark">?</b>
        </div>
        <div class="tb-row">
          <b class="t w23 sel tt c-k">T</b>
          <b class="t w22 tt c-b">T</b>
          <b class="t w25 tt c-g">T</b>
          <b class="t w22 tt c-r">T</b>
          <div class="combo combo-font"><span>Arial</span><svg class="chev"><use href="#chev"/></svg></div>
          <div class="combo combo-size"><span>10</span><svg class="chev"><use href="#chev"/></svg></div>
          <b class="t w23 sel tt c-k ml3">B</b>
          <b class="t w22 tt c-k it">I</b>
          <b class="t w23 tt c-k un">U</b>
          <b class="t w25 tt c-k st">S</b>
          <i class="sp w6"></i>
          <b class="t w23 sel"><svg class="i"><use href="#al-l"/></svg></b>
          <b class="t w24"><svg class="i"><use href="#al-c"/></svg></b>
          <b class="t w22"><svg class="i"><use href="#al-r"/></svg></b>
          <b class="t w25"><svg class="i"><use href="#al-j"/></svg></b>
          <i class="sp w4"></i>
          <b class="t w24"><svg class="i"><use href="#v-b"/></svg></b>
          <b class="t w24"><svg class="i"><use href="#v-m"/></svg></b>
          <b class="t w23 sel"><svg class="i"><use href="#v-t"/></svg></b>
        </div>
      </div>
    </div>
    <div class="tb-row row3">
      <b class="t w23 sel"><svg class="i"><use href="#kb"/></svg></b>
      <b class="t w23"><svg class="i"><use href="#tabar"/></svg></b>
      <i class="sp w6"></i>
      <b class="t w23 sel"><svg class="i"><use href="#al-j"/></svg></b>
      <i class="sp w8"></i>
      <b class="t w23 ab">A.</b>
      <b class="t w23 ab">1.</b>
      <b class="t w24 ab sm">A.</b>
      <b class="t w21 ab sm">I.</b>
      <b class="t w24"><svg class="i"><use href="#l1"/></svg></b>
      <b class="t w25"><svg class="i"><use href="#l2"/></svg></b>
      <b class="t w21"><svg class="i"><use href="#l3"/></svg></b>
      <b class="t w24"><svg class="i"><use href="#l3"/></svg></b>
      <b class="t w22"><svg class="i"><use href="#l4"/></svg></b>
      <i class="sp w6"></i>
      <b class="t w22"><svg class="i"><use href="#d-b"/></svg></b>
      <b class="t w23"><svg class="i"><use href="#d-y"/></svg></b>
      <b class="t w25"><svg class="i"><use href="#d-u"/></svg></b>
      <b class="t w24"><svg class="i"><use href="#d-p"/></svg></b>
      <i class="sp w6"></i>
      <b class="t w24"><svg class="i"><use href="#s0"/></svg></b>
      <b class="t w23"><svg class="i"><use href="#sy"/></svg></b>
      <b class="t w23 sel"><svg class="i"><use href="#sc"/></svg></b>
      <b class="t w25"><svg class="i"><use href="#sg"/></svg></b>
      <i class="sp w4"></i>
      <i class="gap27"></i>
      <b class="t w23 sel"><svg class="i"><use href="#ok-k"/></svg></b>
      <b class="t w24"><svg class="i"><use href="#ok-b"/></svg></b>
      <b class="t w22"><svg class="i"><use href="#ok-g"/></svg></b>
      <b class="t w24"><svg class="i"><use href="#ok-r"/></svg></b>
      <i class="sp w4"></i>
      <b class="t w30"><svg class="i"><use href="#pen1"/></svg></b>
      <b class="t w36"><svg class="i"><use href="#pen2"/></svg></b>
    </div>
  </div>
  <i class="vline tall"></i>
  <div class="closer"><svg class="cl-ic"><use href="#ok"/></svg><span>Zatvori<br>sa snimanjem</span></div>
  <i class="vline tall"></i>
  <div class="closer"><svg class="cl-ic"><use href="#no"/></svg><span>Zatvori<br>bez snimanja</span></div>
  <i class="vline tall"></i>
</section>

<div class="ruler">
  <div class="ruler-sq"></div>
  <div class="ruler-long"></div>
</div>

<main class="work">
  <div class="leftbar"><div class="leftbox"></div></div>
  <div class="viewer">
    <div class="viewer-main">
      <div class="canvas">
        <article class="page">
          <div class="report">
            <div class="tbox thin info">
              <table>
                <colgroup><col class="c1"><col></colgroup>
                <tr class="h25"><td>Firma:</td><td class="firm">GRADITELJ d.o.o. ZAGREB</td></tr>
                <tr class="h24"><td colspan="2" class="num">ZAGREB, 16.06.2024.</td></tr>
                <tr class="h24"><td colspan="2"></td></tr>
                <tr class="h49"><td colspan="2" class="doc-title">Stanje knjiženja</td></tr>
                <tr class="h24"><td colspan="2"></td></tr>
                <tr class="h25"><td>Period</td><td class="bold">01.01.2024. do 31.12.2024.</td></tr>
              </table>
            </div>
            <div class="tbox thick head">
              <table>
                <colgroup><col class="c1"><col class="c2"><col class="c3"><col class="c4"><col class="c5"><col class="c6"><col></colgroup>
                <tr class="hh">
                  <th>DATUM</th><th>DOGAĐAJ</th><th>OPIS</th><th>IMOVINA</th><th>ZALIHE</th><th>MATERIJALNI<br>TROŠKOVI</th><th>OSTALI<br>TROŠKOVI</th>
                </tr>
                <tr class="hn"><th>1</th><th>2</th><th>3</th><th>4</th><th>5</th><th>6</th><th>7</th></tr>
              </table>
            </div>
            <div class="section">PRETHODNO STANJE 01.01.2024.</div>
            <div class="tbox thin r1">
              <table>
                <colgroup><col class="c1"><col class="c2"><col class="c3"><col class="c4"><col class="c5"><col class="c6"><col></colgroup>
                <tr><td class="cen cr">**</td><td class="cen">**</td><td class="bold">UKUPNO</td><td class="cr"></td><td class="num bold">15.514,92</td><td></td><td class="cr"></td></tr>
              </table>
            </div>
            <div class="section s2">NABAVLJENO PO ULAZNIM RAČUNIMA - PRIMKAMA</div>
            <div class="tbox thin r3">
              <table>
                <colgroup><col class="c1"><col class="c2"><col class="c3"><col class="c4"><col class="c5"><col class="c6"><col></colgroup>
                <tr><td class="cen cr">27.01.2024.</td><td class="cen">URA-0001</td><td>PARTNER1, 22-2012</td><td class="cr"></td><td></td><td class="num">0,12</td><td class="cr"></td></tr>
                <tr><td class="cen cr">16.06.2024.</td><td class="cen">URA-0002</td><td>PARTNER1, 123-1-1</td><td class="cr"></td><td class="num">3.649,00</td><td class="num">4.877,00</td><td class="cr"></td></tr>
                <tr><td class="cen cr">16.06.2024.</td><td class="cen">URA-0003</td><td>PARTNER1, 22-2-2</td><td class="cr"></td><td class="num">6.900,00</td><td></td><td class="cr"></td></tr>
              </table>
            </div>
            <div class="tbox thick total">
              <table>
                <colgroup><col class="c1"><col class="c2"><col class="c3"><col class="c4"><col class="c5"><col class="c6"><col></colgroup>
                <tr><td class="cen cr">**</td><td class="cen">**</td><td class="bold">UKUPNO</td><td class="cr"></td><td class="num bold">10.549,00</td><td class="num bold">4.877,12</td><td class="cr"></td></tr>
              </table>
            </div>
            <div class="section s3">UTROŠENO SA ZALIHA</div>
            <div class="tbox thin r1 s2">
              <table>
                <colgroup><col class="c1"><col class="c2"><col class="c3"><col class="c4"><col class="c5"><col class="c6"><col></colgroup>
                <tr><td class="cen cr">16.06.2024.</td><td class="cen">UTR-0001</td><td>Prijenos sa zaliha na troškove</td><td class="cr"></td><td class="num red">-120,00</td><td class="num">120,00</td><td class="cr"></td></tr>
              </table>
            </div>
            <div class="tbox thick total">
              <table>
                <colgroup><col class="c1"><col class="c2"><col class="c3"><col class="c4"><col class="c5"><col class="c6"><col></colgroup>
                <tr><td class="cen cr">**</td><td class="cen">**</td><td class="bold">UKUPNO</td><td class="cr"></td><td class="num bold red">-120,00</td><td class="num bold">120,00</td><td class="cr"></td></tr>
              </table>
            </div>
          </div>
        </article>
      </div>
      <div class="vscroll"><i class="vthumb"></i></div>
    </div>
    <div class="hscroll"><div class="htrack"><i class="hthumb"></i></div><div class="hcorner"></div></div>
  </div>
</main>

<footer class="status">Licenca:&nbsp; (C1) ADRIAKOD DOO CRIKVENICA</footer>

<div class="taskbar">
  <div class="widget">
    <span class="w-logo"><i class="w-arc"></i><i class="w-badge">1</i></span>
    <span class="w-txt"><span>NAM - ENG</span><span>Game score</span></span>
  </div>
  <div class="tk-win"><span class="winlogo"><i></i><i></i><i></i><i></i></span></div>
  <div class="search">
    <svg class="s-glass" viewBox="0 0 16 16"><circle cx="6.500" cy="6.500" r="5" fill="none" stroke="#333" stroke-width="1.400"/><path d="M10 10l5 5" stroke="#333" stroke-width="1.400"/></svg>
    <span class="s-text">Pretraživanje</span>
    <svg class="s-horse"><use href="#s-hor"/></svg>
  </div>
  <div class="tk-apps">
    <span class="app"><svg class="ai"><use href="#t-view"/></svg></span>
    <span class="app"><svg class="ai"><use href="#t-chat"/></svg></span>
    <span class="app"><svg class="ai"><use href="#t-fold"/></svg></span>
    <span class="app"><svg class="ai"><use href="#t-edge"/></svg></span>
    <span class="app"><svg class="ai"><use href="#t-store"/></svg></span>
    <span class="app"><svg class="ai"><use href="#t-cmd"/></svg></span>
    <span class="app run"><svg class="ai"><use href="#t-chrome"/></svg></span>
    <span class="app"><svg class="ai"><use href="#t-gear"/></svg></span>
    <span class="app"><svg class="ai"><use href="#t-rem"/></svg></span>
    <span class="app"><svg class="ai"><use href="#t-note"/></svg></span>
    <span class="app"><svg class="ai"><use href="#t-vbox"/></svg></span>
    <span class="app"><svg class="ai"><use href="#t-pal"/></svg></span>
    <span class="app run"><svg class="ai"><use href="#t-sun"/></svg></span>
    <span class="app"><svg class="ai"><use href="#t-calc"/></svg></span>
    <span class="app run"><svg class="ai"><use href="#t-pic"/></svg></span>
    <span class="app run"><svg class="ai"><use href="#t-term"/></svg></span>
    <span class="app run"><svg class="ai"><use href="#t-vsc"/></svg></span>
    <span class="app active"><svg class="ai"><use href="#logo"/></svg></span>
  </div>
  <div class="tray">
    <span class="tr-up"></span>
    <span class="tr-lang">HRV</span>
    <svg class="tr-ic"><use href="#s-mon"/></svg>
    <svg class="tr-ic2"><use href="#s-spk"/></svg>
    <span class="tr-clock"><span>12:24</span><span>16.06.2024.</span></span>
    <svg class="tr-bell"><use href="#s-bell"/></svg>
  </div>
</div>

<aside class="matwin">
  <div class="mat-title">
    <svg class="mat-logo"><use href="#logo"/></svg>
    <span class="mat-name">Materijal</span>
    <div class="mat-btns">
      <svg class="wb"><use href="#w-min"/></svg>
      <svg class="wb"><use href="#w-box"/></svg>
      <svg class="wb"><use href="#w-x"/></svg>
    </div>
  </div>
  <div class="mat-band">
    <div class="band-item"><svg class="band-db"><use href="#db"/></svg><span>Centralna baza</span></div>
    <div class="band-item"><svg class="band-ic"><use href="#b-flop"/></svg><span>Lokalna baza</span></div>
    <div class="band-item"><svg class="band-ic"><use href="#globe"/></svg><span>Eksterna baza</span></div>
  </div>
  <div class="mat-tools">
    <div class="mat-bigs">
      <div class="big"><svg class="big-doc"><use href="#b-doc"/></svg><span>Novi</span></div>
      <div class="big"><svg class="big-ic"><use href="#b-fold"/></svg><span>Otvori</span></div>
    </div>
    <i class="vline mid"></i>
    <div class="mat-rows">
      <div class="tb-row">
        <b class="t w24"><svg class="i"><use href="#delx"/></svg></b>
        <b class="t w24"><svg class="i"><use href="#clk"/></svg></b>
        <b class="t w23 az"><span class="az-1">A</span><span class="az-2">Z</span><i class="az-ar"></i></b>
        <b class="t w24 az"><span class="az-2">Z</span><span class="az-1">A</span><i class="az-ar"></i></b>
        <span class="mat-input"></span>
        <b class="t w28 ml3"><svg class="i"><use href="#binoc"/></svg></b>
        <i class="sp w2"></i>
        <b class="t w23 sel ml1"><svg class="i"><use href="#calc"/></svg></b>
        <b class="t w28"><svg class="i"><use href="#obook"/></svg></b>
        <b class="t w16"><svg class="i"><use href="#ytree"/></svg></b>
        <b class="t w28"><svg class="i"><use href="#bks"/></svg></b>
        <i class="sp w2"></i>
        <b class="t w26 dollar">$</b>
        <i class="sp w2"></i>
        <b class="t w24"><svg class="i"><use href="#undo"/></svg></b>
        <b class="t w22"><svg class="i"><use href="#tlit"/></svg></b>
        <b class="t w22"><svg class="i"><use href="#clbh"/></svg></b>
        <b class="t w28"><svg class="i"><use href="#phone"/></svg></b>
        <b class="t w16"><svg class="i"><use href="#nbk"/></svg></b>
        <b class="t w24"><svg class="i"><use href="#chart"/></svg></b>
        <b class="t w22"><svg class="i"><use href="#cal"/></svg></b>
      </div>
      <div class="tb-row">
        <b class="t w21"><svg class="i"><use href="#ghand"/></svg></b>
        <b class="t w23 sel"><svg class="i"><use href="#lad"/></svg></b>
        <b class="t w25"><svg class="i"><use href="#exc"/></svg></b>
        <b class="t w18"><svg class="i"><use href="#trk"/></svg></b>
        <b class="t w30"><svg class="i"><use href="#arrd"/></svg></b>
        <b class="t w18"><svg class="i"><use href="#ytree"/></svg></b>
        <i class="sp w4"></i>
        <b class="t w25"><svg class="i"><use href="#trid"/></svg></b>
        <b class="t w24 qk"><svg class="i"><use href="#clkq"/></svg><span class="qk-m">?</span></b>
        <b class="t w22"><svg class="i"><use href="#dex"/></svg></b>
        <i class="sp w8"></i>
        <b class="t w22"><svg class="i"><use href="#d-m"/></svg></b>
        <b class="t w28"><svg class="i"><use href="#d-l"/></svg></b>
        <b class="t w16"><svg class="i"><use href="#d-t"/></svg></b>
        <i class="sp w12"></i>
        <b class="t w22"><svg class="i"><use href="#sign"/></svg></b>
        <b class="t w24"><svg class="i"><use href="#signd"/></svg></b>
        <i class="sp w4"></i>
        <b class="t w30"><svg class="i"><use href="#net"/></svg></b>
        <b class="t w16"><svg class="i"><use href="#netd"/></svg></b>
        <i class="sp w16"></i>
        <b class="t w22"><svg class="i"><use href="#d-p"/></svg></b>
        <b class="t w18"><svg class="i"><use href="#man"/></svg></b>
        <b class="t w24"><svg class="i"><use href="#hsg"/></svg></b>
        <b class="t w21"><svg class="i"><use href="#hsr"/></svg></b>
        <b class="t w28"><svg class="i"><use href="#hnds"/></svg></b>
        <b class="t w16"><svg class="i"><use href="#d-b"/></svg></b>
      </div>
    </div>
  </div>
  <div class="mat-list">
    <div class="mat-rowsbox">
      <div class="row on"><span>CEMENT</span><span>kg</span><span>0,12</span></div>
      <div class="row"><span>PIJESAK</span><span>m3</span><span>12,28</span></div>
      <div class="row"><span>VAPNO</span><span>kg</span><span>0,08</span></div>
      <div class="row"><span>ŠLJUNAK</span><span>m3</span><span>12,21</span></div>
      <div class="row"><span>GIPS</span><span>kg</span><span>0,82</span></div>
      <div class="row"><span>PERLIT</span><span>kg</span><span>1,47</span></div>
      <div class="row"><span>ŠAMOTNO BRAŠNO</span><span>kg</span><span>4,25</span></div>
      <div class="row"><span>VODENO STAKLO</span><span>kg</span><span>2,19</span></div>
      <div class="row"><span>OPEKA BLOK 29x19x14</span><span>kom</span><span>0,42</span></div>
      <div class="row"><span>OPEKA BLOK 29x19x19</span><span>kom</span><span>0,40</span></div>
      <div class="row"><span>OPEKA NF ŠAMOTNA</span><span>kom</span><span>2,65</span></div>
      <div class="row"><span>KAMEN LOMLJENI</span><span>m3</span><span>6,11</span></div>
      <div class="row"><span>LJEPILO ZA KERAMIKU</span><span>kg</span><span>0,35</span></div>
      <div class="row"><span>MASA ZA GLETANJE</span><span>kg</span><span>0,98</span></div>
      <div class="row"><span>RESITOL</span><span>kg</span><span>0,82</span></div>
      <div class="row"><span>BITUMEN, BITIZOL</span><span>kg</span><span>0,29</span></div>
      <div class="row"><span>BITUMENSKA ČETKA</span><span>kom</span><span>6,64</span></div>
      <div class="row"><span>ČAVLI OBIČNI</span><span>kg</span><span>0,78</span></div>
      <div class="row"><span>ŽICA POCINČANA</span><span>kg</span><span>0,64</span></div>
      <div class="row"><span>KLAMFA</span><span>kom</span><span>1,59</span></div>
      <div class="row"><span>ŠTUCNA ZA DIMNJAK</span><span>kom</span><span>7,57</span></div>
      <div class="row"><span>ČELIČNI L-PROFIL</span><span>kg</span><span>0,61</span></div>
      <div class="row"><span>PLOČE BETONSKE 40x40x5</span><span>kom</span><span>1,86</span></div>
      <div class="row"><span>RABIC PLETIVO</span><span>m2</span><span>0,66</span></div>
      <div class="row"><span>GAL-ŠTITNICI</span><span>kom</span><span>2,46</span></div>
      <div class="row"><span>EKSPLOZIV</span><span>kg</span><span>1,22</span></div>
      <div class="row"><span>KAPISLA</span><span>kom</span><span>0,33</span></div>
      <div class="row"><span>ŠTAPIN</span><span>m1</span><span>0,49</span></div>
      <div class="row"><span>BATUDA</span><span>m3</span><span>10,49</span></div>
      <div class="row"><span>ŽICA PALJENA</span><span>kg</span><span>0,50</span></div>
      <div class="row"><span>BLAŽUJKA</span><span>m3</span><span>982,15</span></div>
      <div class="row"><span>PVC CIJEV 24 MM</span><span>m1</span><span>0,49</span></div>
      <div class="row"><span>ULJE LANENO - FIRNIS</span><span>kg</span><span>1,99</span></div>
      <div class="row"><span>OKOV ZA KROV</span><span>kg</span><span>3,98</span></div>
      <div class="row"><span>BRODSKI POD 24 MM</span><span>m2</span><span>9,82</span></div>
      <div class="row"><span>ŽELJEZO BETONSKO ČBR</span><span>kg</span><span>0,33</span></div>
      <div class="row"><span>PODMETAČI ZA ARMATURU</span><span>kom</span><span>0,10</span></div>
      <div class="row"><span>ŽELJEZO BETONSKO BI</span><span>kg</span><span>0,72</span></div>
      <div class="row"><span>CEMENTOL</span><span>kg</span><span>0,98</span></div>
      <div class="row"><span>KANALICE</span><span>kom</span><span>0,36</span></div>
      <div class="row"><span>ETERNIT 40x40</span><span>kom</span><span>0,56</span></div>
      <div class="row"><span>ETERNIT 30x30</span><span>kom</span><span>0,52</span></div>
      <div class="row"><span>PLOČE SALONIT105x122</span><span>kom</span><span>3,98</span></div>
      <div class="row"><span>SLJEMENJACI SALONIT</span><span>kom</span><span>4,78</span></div>
      <div class="row"><span>VIJAK ZETA-SALONIT</span><span>kom</span><span>0,15</span></div>
      <div class="row"><span>KULIR</span><span>kg</span><span>0,12</span></div>
      <div class="row"><span>KAMENO BRAŠNO</span><span>kg</span><span>0,02</span></div>
      <div class="row"><span>BRUSEVI</span><span>kom</span><span>13,01</span></div>
      <div class="row"><span>LOMLJENE KAMENE PLOČE</span><span>kg</span><span>0,24</span></div>
      <div class="row"><span>PLOČE TERACO</span><span>m2</span><span>11,68</span></div>
    </div>
    <div class="mat-scroll"><i class="ms-top"></i><i class="ms-thumb"></i><i class="ms-bot"></i></div>
  </div>
</aside>
</body>
</html>
```
FILE: styles.css
```css
* { box-sizing: border-box; }
html, body { margin: 0; height: 100%; }
body {
  width: 1920px; height: 1080px; overflow: hidden; position: relative;
  display: flex; flex-direction: column; background: #fff; color: #000;
  font: 11px "Liberation Sans", Arial, sans-serif;
}
.defs { position: absolute; width: 0; height: 0; }
svg { display: block; flex: none; }
i { font-style: normal; }

/* title */
.titlebar { height: 23px; background: #4f565c; color: #fff; display: flex; align-items: center; flex: none; }
.title-logo { width: 17px; height: 17px; margin-left: 2px; }
.title-text { margin-left: 5px; font-size: 11.1px; }
.win-btns { margin-left: auto; display: flex; gap: 35px; padding-right: 21px; color: #fff; }
.wb { width: 10px; height: 10px; }

/* menu */
.menubar { height: 20px; flex: none; display: flex; align-items: flex-start; border-bottom: 2px solid #f0f0f0; }
.menu-tree { width: 15px; height: 15px; margin: 2px 0 0 7px; }
.mdi-btns { margin-left: auto; display: flex; gap: 13px; padding: 6px 6px 0 0; color: #555; }
.mb { width: 8px; height: 8px; }

/* ribbon */
.ribbon { height: 37px; flex: none; background: #fddd88; border-bottom: 1px solid #aaa; display: flex; align-items: center; padding-left: 16px; gap: 17.4px; font-size: 10.8px; }
.rib-arrow { width: 11px; height: 7px; margin-right: -6px; }
.rib-item { display: flex; align-items: center; gap: 4px; color: #111; }
.rib-ic { width: 28px; height: 28px; display: flex; align-items: center; justify-content: center; }
.ric { width: 26px; height: 26px; }
.ric-doc { width: 19px; height: 27px; }
.ric-tab { width: 22px; height: 20px; }

/* toolbar */
.toolbar { height: 91px; flex: none; display: flex; align-items: flex-start; padding-top: 6px; }
.tb-left { width: 713px; flex: none; }
.tb-top { display: flex; align-items: flex-start; }
.bigs { width: 159px; flex: none; display: flex; gap: 11px; padding: 3px 0 0 11px; }
.big { display: flex; flex-direction: column; align-items: center; }
.big span { margin-top: 3px; line-height: 13px; }
.big-doc { width: 18px; height: 24px; }
.big-ic { width: 22px; height: 24px; }
.vline { flex: none; width: 1px; height: 43px; margin-top: 3px; background: #a0a0a0; }
.vline.tall { height: 67px; margin-top: 3px; }
.vline.mid { height: 43px; margin-top: 7px; }
.tb-rows { margin-left: 5px; display: flex; flex-direction: column; gap: 6px; }
.tb-row { display: flex; height: 21px; align-items: center; }
.row3 { margin-top: 4px; padding-left: 9px; }
.t { height: 21px; flex: none; display: flex; align-items: center; justify-content: center; font-weight: 400; }
.t.sel { background: #bdbdbd; border: 1px solid #6e6e6e; }
.i { width: 19px; height: 19px; }
.w2 { width: 2px; } .w4 { width: 4px; } .w6 { width: 6px; } .w8 { width: 8px; } .w12 { width: 12px; } .w16 { width: 16px; }
.w18 { width: 18px; } .w21 { width: 21px; } .w22 { width: 22px; } .w23 { width: 23px; } .w24 { width: 24px; } .w25 { width: 25px; }
.w26 { width: 26px; } .w28 { width: 28px; } .w30 { width: 30px; } .w36 { width: 36px; }
.ml1 { margin-left: 1px; } .ml3 { margin-left: 3px; }
.gap27 { width: 27px; flex: none; }
.sp { flex: none; height: 21px; display: flex; justify-content: center; }
.sp::before { content: ""; width: 1px; height: 100%; background: #a0a0a0; }
.txt-11 { font: 700 13px "Liberation Serif", serif; }
.qmark { font: 700 17px "Liberation Sans", sans-serif; color: #f2e500; -webkit-text-stroke: .6px #444; }
.dollar { font: 400 17px "Liberation Sans", sans-serif; }
.tt { font: 700 15px "Liberation Serif", serif; }
.c-k { color: #000; } .c-b { color: #00007f; } .c-g { color: #007f00; } .c-r { color: #c00000; }
.it { font-style: italic; } .un { text-decoration: underline; } .st { text-decoration: line-through; text-decoration-color: #c00000; }
.ab { font: 700 14px "Liberation Serif", serif; color: #00007f; letter-spacing: .5px; }
.ab.sm { font-size: 12px; }
.combo { flex: none; height: 21px; border: 1px solid #d0d0d0; border-radius: 3px; background: #fff; display: flex; align-items: center; justify-content: space-between; padding: 0 5px 0 3px; font-size: 12px; color: #222; }
.combo-font { width: 124px; margin-left: 5px; }
.combo-size { width: 40px; margin-left: 7px; font-size: 13px; }
.chev { width: 9px; height: 6px; }
.closer { width: 81px; flex: none; display: flex; flex-direction: column; align-items: center; text-align: center; line-height: 13px; padding-top: 5px; font-size: 10.2px; }
.cl-ic { width: 24px; height: 24px; margin-bottom: 9px; }

/* ruler */
.ruler { flex: none; height: 17px; display: flex; padding-left: 3px; margin-top: 0; }
.ruler-sq { width: 19px; border: 1px solid #707070; }
.ruler-long { width: 1874px; margin-left: 5px; border: 1px solid #707070; }

/* work */
.work { flex: none; height: 811px; margin-top: 4px; display: flex; }
.leftbar { width: 27px; flex: none; padding: 1px 0 17px 3px; }
.leftbox { width: 19px; height: 100%; border: 1px solid #707070; }
.viewer { width: 1893px; display: flex; flex-direction: column; }
.viewer-main { flex: 1; min-height: 0; display: flex; }
.canvas { width: 1874px; flex: none; background: #77728f; padding: 16px 0 0 16px; overflow: hidden; }
.page { width: 1162px; height: 100%; background: #fff; overflow: hidden; padding: 194px 0 0 138px; }
.report { width: 925px; font-size: 13px; }
.vscroll { flex: 1; background: #f0f0f0; border-left: 1px solid #d5d5d5; display: flex; justify-content: center; padding-top: 18px; }
.vthumb { width: 3px; height: 757px; background: #a6a6a6; }
.hscroll { height: 15px; flex: none; display: flex; }
.htrack { width: 1875px; background: #f0f0f0; border-left: 1px solid #707070; border-bottom: 1px solid #707070; padding: 7px 0 0 17px; margin-left: -1px; }
.hthumb { display: block; width: 1839px; height: 3px; background: #808080; }
.hcorner { flex: 1; border: 1px solid #707070; }

/* report tables */
.tbox { width: 925px; background: #fff; }
.tbox table { width: 100%; height: 100%; table-layout: fixed; border-collapse: collapse; }
.tbox td, .tbox th { padding: 0 6px; border-left: 1px solid #a8a8a8; border-top: 1px solid #a8a8a8; white-space: nowrap; }
.tbox tr:first-child > * { border-top: 0; }
.tbox tr > *:first-child { border-left: 0; }
.thin { border: 1px solid #b0b0b0; }
.thick { border: 3px solid #a0a0a0; }
.thin .c1 { width: 87px; } .thick .c1 { width: 85px; }
.c2 { width: 88px; } .c3 { width: 205px; } .c4 { width: 188px; } .c5 { width: 118px; } .c6 { width: 118px; }
.info { height: 172px; }
.info td { border-color: #c4c4c4; padding-bottom: 2px; }
.h25 { height: 25px; } .h24 { height: 24px; } .h49 { height: 49px; }
.firm { color: #c80010; font-weight: 700; }
.tbox td.doc-title { font-size: 34px; font-weight: 700; text-align: center; padding-bottom: 0; }
.bold { font-weight: 700; }
.tbox td.num { text-align: right; padding: 0 3px; }
.info td.num { padding-bottom: 2px; }
.cen { text-align: center; }
.tbox td.cen { padding: 0 2px; }
.cr { background: #ffffef; }
.red { color: #d00020; }
.head { height: 77px; margin-top: 6px; }
.head th { background: #ffffef; font-size: 12.5px; line-height: 16px; }
.hh { height: 56px; }
.hn { height: 15px; }
.tbox .hn th { font-size: 13px; padding-top: 2px; line-height: 13px; }
.section { height: 32px; margin-top: 14px; border: 3px solid #a0a0a0; padding-left: 4px; font-size: 18px; font-weight: 700; line-height: 26px; white-space: nowrap; }
.section.s2 { margin-top: 7px; }
.section.s3 { margin-top: 13px; }
.r1 { height: 25px; margin-top: 6px; }
.r1.s2 { margin-top: 7px; }
.r3 { height: 75px; margin-top: 7px; }
.total { height: 27px; margin-top: 6px; }

/* status */
.status { flex: none; height: 29px; padding-left: 17px; line-height: 33px; font-size: 10.7px; }

/* taskbar */
.taskbar { flex: none; height: 48px; background: #1c1c1c; color: #fff; display: flex; align-items: center; position: relative; z-index: 2; border-top: 1px solid #2e2e2e; }
.widget { width: 430px; flex: none; display: flex; align-items: center; padding-left: 20px; }
.w-logo { position: relative; width: 24px; height: 36px; flex: none; }
.w-arc { position: absolute; left: 0; top: 5px; width: 22px; height: 28px; border-radius: 50%; background: repeating-linear-gradient(100deg, #1ba0c8 0 2px, #0a3f55 2px 4px); }
.w-badge { position: absolute; left: 10px; top: 1px; width: 16px; height: 16px; border-radius: 50%; background: #c42b1c; font-size: 10px; line-height: 16px; text-align: center; color: #fff; }
.w-txt { margin-left: 6px; display: flex; flex-direction: column; gap: 3px; font: 12px/13px "Noto Sans", sans-serif; }
.w-txt span:last-child { color: #ddd; font-size: 11.6px; }
.tk-win { width: 44px; flex: none; display: flex; justify-content: center; }
.winlogo { width: 24px; height: 24px; display: grid; grid-template-columns: 1fr 1fr; gap: 1px; }
.winlogo i { background: linear-gradient(135deg, #6fe3ff, #1590e6); }
.search { width: 218px; height: 30px; margin-left: 4px; flex: none; border-radius: 15px; background: #f2f2f2; display: flex; align-items: center; padding-left: 11px; color: #555; font: 12.7px "Noto Sans", sans-serif; }
.s-glass { width: 15px; height: 15px; }
.s-text { margin-left: 10px; }
.s-horse { width: 44px; height: 34px; margin-left: auto; margin-right: 2px; }
.tk-apps { margin-left: 3px; display: flex; flex: none; }
.app { width: 44px; height: 42px; flex: none; display: flex; align-items: center; justify-content: center; position: relative; }
.ai { width: 26px; height: 26px; }
.app.run::after { content: ""; position: absolute; left: 20px; bottom: 1px; width: 4px; height: 4px; border-radius: 50%; background: #8a8a8a; }
.app.active { background: #2b2b2b; border-radius: 5px; }
.app.active::after { content: ""; position: absolute; left: 14px; bottom: 1px; width: 16px; height: 3px; border-radius: 2px; background: #9a9a9a; }
.tray { margin-left: auto; display: flex; align-items: center; width: 238px; flex: none; font: 12px "Noto Sans", sans-serif; }
.tr-up { width: 7px; height: 7px; border-left: 1.5px solid #fff; border-top: 1.5px solid #fff; transform: rotate(45deg); margin: 4px 0 0 7px; flex: none; }
.tr-lang { width: 36px; margin-left: 16px; text-align: center; }
.tr-ic { width: 20px; height: 24px; margin-left: 10px; }
.tr-ic2 { width: 18px; height: 18px; margin-left: 4px; }
.tr-clock { width: 66px; margin-left: 13px; display: flex; flex-direction: column; align-items: flex-end; gap: 3px; line-height: 13px; white-space: nowrap; }
.tr-bell { width: 18px; height: 18px; margin-left: 6px; }

/* material window */
.matwin { position: absolute; left: 1229px; top: 97px; width: 650px; height: 875px; background: #fff; border: 1px solid #bdbdbd; border-radius: 8px; box-shadow: 0 8px 40px rgba(0,0,0,.38); display: flex; flex-direction: column; overflow: hidden; z-index: 1; }
.mat-title { height: 29px; flex: none; background: #f3f3f3; display: flex; align-items: center; padding: 0 0 2px 8px; }
.mat-logo { width: 16px; height: 16px; }
.mat-name { margin-left: 5px; font-size: 12px; color: #8a8a8a; }
.mat-btns { margin-left: auto; display: flex; gap: 35px; padding-right: 19px; color: #a8a8a8; }
.mat-band { height: 36px; flex: none; background: #fddd88; border-bottom: 1px solid #aaa; display: flex; align-items: center; padding-left: 15px; font-size: 10.7px; }
.band-item { display: flex; align-items: center; gap: 7px; margin-right: 20px; }
.band-db { width: 21px; height: 28px; }
.band-ic { width: 23px; height: 24px; }
.mat-tools { height: 57px; flex: none; display: flex; border-bottom: 1px solid #aaa; align-items: flex-start; }
.mat-bigs { width: 89px; flex: none; display: flex; gap: 15px; padding: 9px 0 0 14px; }
.mat-rows { margin-left: 3px; padding-top: 6px; display: flex; flex-direction: column; gap: 5px; }
.mat-input { flex: none; width: 79px; height: 19px; margin-left: 4px; border: 1px solid #707070; background: #fff; }
.az { position: relative; flex-direction: column; font: 700 9px/9px "Liberation Serif", serif; align-items: flex-start; padding-left: 5px; }
.az-1 { color: #00007f; } .az-2 { color: #8a0000; }
.az-ar { position: absolute; left: 15px; top: 3px; width: 1px; height: 14px; background: #000; }
.az-ar::after { content: ""; position: absolute; left: -3px; bottom: -2px; border: 3.5px solid transparent; border-top-color: #000; border-bottom: 0; }
.qk { position: relative; }
.qk-m { position: absolute; right: 2px; bottom: 0; font: 700 11px "Liberation Sans", sans-serif; }
.mat-list { flex: 1; min-height: 0; display: flex; }
.mat-rowsbox { width: 631px; flex: none; font-size: 11.85px; }
.row { height: 15px; display: grid; grid-template-columns: 491px 1fr auto; padding: 0 5px 0 2px; line-height: 16px; white-space: nowrap; }
.row.on { background: #000; color: #fff; }
.mat-scroll { flex: 1; display: flex; flex-direction: column; align-items: center; }
.ms-top { width: 100%; height: 15px; background: #f0f0f0; }
.ms-thumb { width: 1px; height: 53px; background: #bbb; margin-top: 2px; }
.ms-bot { width: 100%; height: 20px; margin-top: auto; background: #f0f0f0; }
```
